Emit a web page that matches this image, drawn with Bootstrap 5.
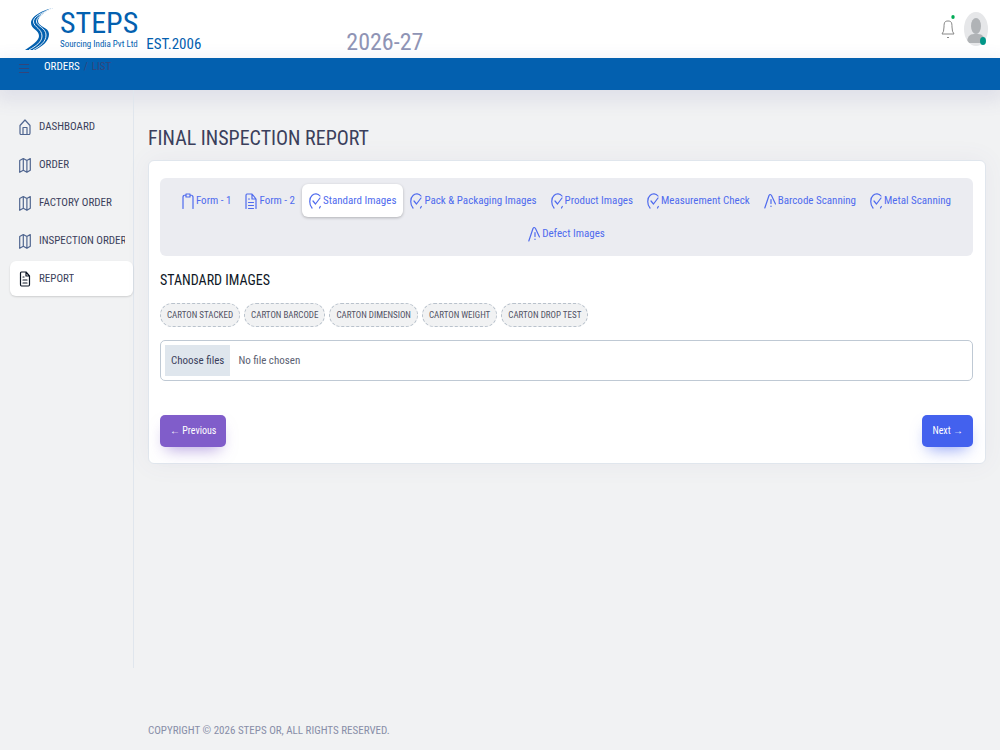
<!DOCTYPE html>
<html lang="en">
<head>
<meta charset="utf-8">
<meta name="viewport" content="width=device-width, initial-scale=1">
<title>Final Inspection Report</title>
<link href="https://cdn.jsdelivr.net/npm/bootstrap@5.3.0/dist/css/bootstrap.min.css" rel="stylesheet">
<style>
  body { background: #f1f2f3; font-family: "Roboto Condensed", "Liberation Sans Narrow", "Liberation Sans", sans-serif; font-size: 11px; line-height: 16px; color: #3b3f5c; }
  a { text-decoration: none; }
  .icon { fill: none; stroke: currentColor; stroke-width: 1.2; stroke-linecap: round; stroke-linejoin: round; flex: none; }
  .masthead { height: 58px; padding: 0 12px 0 24px; }
  .brand { color: #0360af; }
  .logo-name { font-size: 30px; line-height: 30px; }
  .logo-sub { font-size: 9px; line-height: 12px; }
  .logo-est { font-size: 15px; line-height: 20px; }
  .season { font-size: 24px; line-height: 32px; color: #8f94b5; margin-left: 145px; }
  .presence { width: 6px; height: 8px; right: 2px; bottom: 1px; background: #009688; }
  .crumbs { height: 32px; background: #0360af; padding: 1px 0 0 18px; gap: 4px; box-shadow: 0 6px 18px 4px rgba(94, 92, 154, .12); }
  .crumbs .crumb-muted { color: #34457a; }
  .crumbs .menu-btn { margin-right: 10px; }
  .side { width: 134px; height: 578px; border-right: 1px solid #e0e6ed; padding: 19px 0 0 10px; }
  .side a { height: 35px; padding: 0 8px 0 9px; gap: 8px; margin-bottom: 3px; color: #3b3f5c; border-radius: 6px; }
  .side a .icon { color: #506690; }
  .side a.current { background: #fff; box-shadow: 0 1px 2px rgba(0, 0, 0, .15); }
  .side a.current .icon { color: #0e1726; }
  .side span { overflow: hidden; white-space: nowrap; }
  .content { padding: 34px 14px 0 14px; }
  .page-title { font-size: 20px; line-height: 28px; margin-bottom: 8px; font-weight: 400; }
  .panel { background: #fff; border: 1px solid #e0e6ed; border-radius: 6px; padding: 17px 12px 16px 11px; box-shadow: 0 0 24px 1px rgba(94, 92, 154, .06); }
  .steps { background: #ebecf1; border-radius: 6px; padding: 6px 0; }
  .steps .step { height: 33px; border: 0; background: none; color: #4f6bee; padding: 0 7px; border-radius: 6px; gap: 2px; }
  .steps .step.current { background: #fff; box-shadow: 0 1px 3px rgba(0, 0, 0, .25); }
  .section-title { font-size: 14px; line-height: 20px; color: #0e1726; margin: 14px 0 13px; font-weight: 400; }
  .tag { border: 1px dashed #b9c2cc; border-radius: 12px; background: #f1f2f3; padding: 3px 6px; font-size: 9px; color: #515365; }
  .picker { height: 41px; border: 1px solid #bfc9d4; border-radius: 5px; padding: 4px; margin: 13px 0 34px; cursor: pointer; color: #5b6172; }
  .picker-btn { background: #dfe6ed; color: #3b3f5c; padding: 8px 6px 7px; height: 31px; }
  .act { height: 32px; padding: 0 10px; border: 0; border-radius: 5px; font-size: 10px; line-height: 16px; }
  .act, .act:hover { color: #fff; }
  .act-prev, .act-prev:hover { background: #805dca; box-shadow: 0 8px 16px -6px rgba(128, 93, 202, .6); }
  .act-next, .act-next:hover { background: #4361ee; box-shadow: 0 8px 16px -6px rgba(67, 97, 238, .6); }
  footer { color: #888ea8; padding: 0 14px 11px 148px; }
</style>
</head>
<body class="d-flex flex-column min-vh-100">
<svg class="d-none">
  <symbol id="map" viewBox="0 0 12 16"><path d="M.7 3.500v11.800l3.600-2 3.600 2 3.400-2V1.500L7.900 3.500 4.300 1.500zM4.300 1.500v11.800M7.900 3.500v11.800"/></symbol>
  <symbol id="check" viewBox="0 0 12 16"><path d="M3 15C0 12 0 5 3 2.500c2.500-2.500 6-2 8 .5M4 8l2.500 3L11 5M10.500 15l.8-1.500"/></symbol>
  <symbol id="warn" viewBox="0 0 12 16"><path d="M.8 15 5 2.500Q6 .5 7.500 2.500L11.500 11M7 6.500v4M7 13v.5"/></symbol>
</svg>
<header>
  <div class="masthead d-flex bg-white">
    <a href="#" class="brand d-flex">
      <svg width="32" height="46" viewBox="0 0 32 46" fill="#0360af" class="mt-1"><path d="M29 4C19 6 7 12 7 19c0 6 8 7 8 13 0 5-7 9-14 14h10c8-4 14-9 14-16S14 23 14 17c0-5 7-9 15-13z"/><path d="M28 4.500C17 9 9 13 9.500 18c.5 5 8.500 7 8.500 14 0 6-6 10-13 14M28 4.500C19 9 12 13 12.500 18c.5 4 9.500 6 9.500 13 0 7-6 11-13 15" fill="none" stroke="#fff" stroke-width=".9"/></svg>
      <span class="d-flex flex-column ps-1 pt-2"><span class="logo-name">STEPS</span><span class="logo-sub">Sourcing India Pvt Ltd</span></span>
      <span class="logo-est align-self-end mb-1 ms-2">EST.2006</span>
    </a>
    <div class="season align-self-end">2026-27</div>
    <div class="ms-auto d-flex align-items-center">
      <button class="btn p-0 border-0 me-2" aria-label="Notifications"><svg class="d-block mb-1" width="16" height="28" viewBox="0 0 16 28"><path d="M2 21q2-2 2-7c0-5 1-6 4-6s4 1 4 6q0 5 2 7zM7 24q1 2 2 0" fill="none" stroke="#888"/><ellipse cx="13" cy="4" rx="1.700" ry="2" fill="#00ab55"/></svg></button>
      <div class="position-relative d-flex"><svg width="24" height="34" viewBox="0 0 24 34"><defs><clipPath id="face"><ellipse cx="12" cy="17" rx="12" ry="17"/></clipPath></defs><g clip-path="url(#face)"><path fill="#e6e7e9" d="M0 0h24v34H0z"/><ellipse cx="12" cy="14" rx="5" ry="8" fill="#b0b3b6"/><path d="M3 31q0-9 7-9h4q7 0 7 9z" fill="#b0b3b6"/></g></svg><span class="presence position-absolute rounded-circle"></span></div>
    </div>
  </div>
  <nav class="crumbs d-flex" aria-label="Breadcrumb">
    <button class="menu-btn btn p-0 border-0 crumb-muted align-self-start" aria-label="Menu"><svg class="icon d-block mt-1" width="12" height="12" viewBox="0 0 12 12"><path d="M1.500 1.500h9M1.500 5.500h9M1.500 9.500h9"/></svg></button>
    <a href="#" class="text-white">ORDERS</a><span class="crumb-muted">/</span><span class="crumb-muted">LIST</span>
  </nav>
</header>
<div class="d-flex flex-grow-1">
  <nav class="side flex-shrink-0" aria-label="Main">
    <a href="#" class="d-flex align-items-center"><svg class="icon" width="12" height="16" viewBox="0 0 12 16"><path d="M1 6.500 6 1l5 5.500V14q0 1.500-1 1.500H2Q1 15.500 1 14zM4 15V8.500h4V15"/></svg><span>DASHBOARD</span></a>
    <a href="#" class="d-flex align-items-center"><svg class="icon" width="12" height="16"><use href="#map"/></svg><span>ORDER</span></a>
    <a href="#" class="d-flex align-items-center"><svg class="icon" width="12" height="16"><use href="#map"/></svg><span>FACTORY ORDER</span></a>
    <a href="#" class="d-flex align-items-center"><svg class="icon" width="12" height="16"><use href="#map"/></svg><span>INSPECTION ORDER</span></a>
    <a href="#" class="current d-flex align-items-center"><svg class="icon" width="12" height="16" viewBox="0 0 12 16"><path d="M7 1H2.500Q1.500 1 1.500 2.500v11q0 1.500 1 1.500h7q1 0 1-1.500V5zv4h3.500M4 9h4M4 12h4M4 6h1"/></svg><span>REPORT</span></a>
  </nav>
  <main class="content flex-grow-1">
    <h1 class="page-title">FINAL INSPECTION REPORT</h1>
    <div class="panel">
      <div class="steps d-flex flex-wrap justify-content-center">
        <button class="step d-flex align-items-center"><svg class="icon" width="12" height="16" viewBox="0 0 12 16"><path d="M1 15.500V4q0-2 3-2m4 0q3 0 3 2v11.500M4 1h4v3H4z"/></svg>Form - 1</button>
        <button class="step d-flex align-items-center"><svg class="icon" width="12" height="16" viewBox="0 0 12 16"><path d="M1 15.500V3q0-2 1-2h5l4 5v9.500M7 1v5h4M3.500 9.500h5M3.500 12.500h5M3.500 15.500h5M3.500 6h1"/></svg>Form - 2</button>
        <button class="step current d-flex align-items-center"><svg class="icon" width="12" height="16"><use href="#check"/></svg>Standard Images</button>
        <button class="step d-flex align-items-center"><svg class="icon" width="12" height="16"><use href="#check"/></svg>Pack &amp; Packaging Images</button>
        <button class="step d-flex align-items-center"><svg class="icon" width="12" height="16"><use href="#check"/></svg>Product Images</button>
        <button class="step d-flex align-items-center"><svg class="icon" width="12" height="16"><use href="#check"/></svg>Measurement Check</button>
        <button class="step d-flex align-items-center"><svg class="icon" width="12" height="16"><use href="#warn"/></svg>Barcode Scanning</button>
        <button class="step d-flex align-items-center"><svg class="icon" width="12" height="16"><use href="#check"/></svg>Metal Scanning</button>
        <button class="step d-flex align-items-center"><svg class="icon" width="12" height="16"><use href="#warn"/></svg>Defect Images</button>
      </div>
      <h2 class="section-title">STANDARD IMAGES</h2>
      <div class="d-flex flex-wrap gap-1">
        <span class="tag">CARTON STACKED</span><span class="tag">CARTON BARCODE</span><span class="tag">CARTON DIMENSION</span><span class="tag">CARTON WEIGHT</span><span class="tag">CARTON DROP TEST</span>
      </div>
      <label class="picker d-flex align-items-center" for="files"><span class="picker-btn">Choose files</span><span class="ps-2">No file chosen</span></label>
      <input type="file" id="files" class="visually-hidden" multiple>
      <div class="d-flex justify-content-between">
        <button class="btn act act-prev">← Previous</button>
        <button class="btn act act-next">Next →</button>
      </div>
    </div>
  </main>
</div>
<footer>COPYRIGHT © 2026 STEPS OR, ALL RIGHTS RESERVED.</footer>
<script src="https://cdn.jsdelivr.net/npm/bootstrap@5.3.0/dist/js/bootstrap.bundle.min.js"></script>
</body>
</html>
